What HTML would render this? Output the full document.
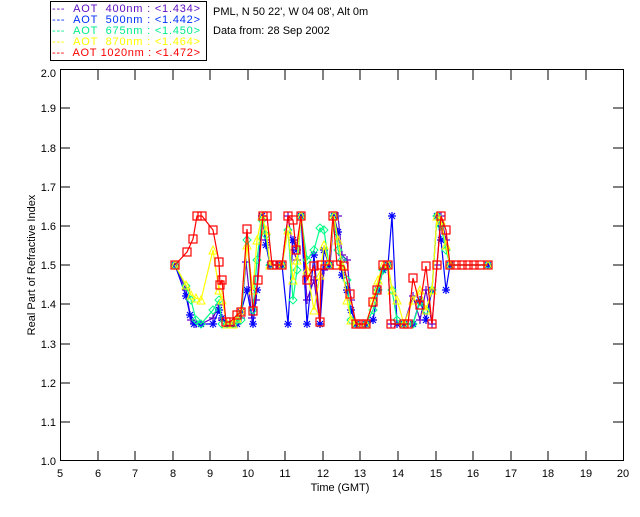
<!DOCTYPE html>
<html><head><style>
body{margin:0;width:640px;height:512px;background:#fff;overflow:hidden;font-family:"Liberation Sans",sans-serif}
svg text{font-family:"Liberation Sans",sans-serif;font-size:11px}
</style></head><body>
<svg width="640" height="512" viewBox="0 0 640 512" xmlns="http://www.w3.org/2000/svg">
<defs>
<marker id="sq" markerWidth="10" markerHeight="10" refX="5" refY="5" markerUnits="userSpaceOnUse"><rect x="1" y="1" width="8" height="8" fill="none" stroke="#f00" stroke-width="1.2"/></marker>
<marker id="st" markerWidth="10" markerHeight="10" refX="5" refY="5" markerUnits="userSpaceOnUse"><path d="M1 5H9M5 1V9M2 2L8 8M8 2L2 8" stroke="#00f" stroke-width="1.2"/></marker>
<marker id="di" markerWidth="10" markerHeight="10" refX="5" refY="5" markerUnits="userSpaceOnUse"><path d="M5 1L9 5L5 9L1 5Z" fill="none" stroke="#0f8" stroke-width="1"/></marker>
<marker id="tr" markerWidth="10" markerHeight="10" refX="5" refY="5" markerUnits="userSpaceOnUse"><path d="M5 1L9 9H1Z" fill="none" stroke="#ff0" stroke-width="1"/></marker>
<marker id="pl" markerWidth="10" markerHeight="10" refX="5" refY="5" markerUnits="userSpaceOnUse"><path d="M1 5H9M5 1V9" stroke="#60c" stroke-width="1.2"/></marker>
</defs>
<rect x="50.5" y="1.5" width="156" height="59" fill="none" stroke="#000"/>
<g font-size="11">
<text x="52" y="12" fill="#6010c0" textLength="148" lengthAdjust="spacing">--- &#160;AOT &#160;400nm : &lt;1.434&gt;</text>
<text x="52" y="23" fill="#0030ff" textLength="148" lengthAdjust="spacing">--- &#160;AOT &#160;500nm : &lt;1.442&gt;</text>
<text x="52" y="34" fill="#00ee88" textLength="148" lengthAdjust="spacing">--- &#160;AOT &#160;675nm : &lt;1.450&gt;</text>
<text x="52" y="45" fill="#ffff00" textLength="148" lengthAdjust="spacing">--- &#160;AOT &#160;870nm : &lt;1.464&gt;</text>
<text x="52" y="56" fill="#ff0000" textLength="148" lengthAdjust="spacing">--- &#160;AOT 1020nm : &lt;1.472&gt;</text>
<text x="213" y="15" fill="#000">PML, N 50 22', W 04 08', Alt 0m</text>
<text x="213" y="34" fill="#000">Data from: 28 Sep 2002</text>
</g>
<rect x="60.5" y="69.5" width="563" height="391" fill="none" stroke="#000"/>
<g stroke="#000">
<path d="M98 461v-10M135 461v-10M173 461v-10M210 461v-10M248 461v-10M285 461v-10M323 461v-10M360 461v-10M398 461v-10M436 461v-10M473 461v-10M511 461v-10M548 461v-10M586 461v-10"/>
<path d="M98 70v10M135 70v10M173 70v10M210 70v10M248 70v10M285 70v10M323 70v10M360 70v10M398 70v10M436 70v10M473 70v10M511 70v10M548 70v10M586 70v10"/>
<path d="M60 422h10M60 383h10M60 344h10M60 304h10M60 265h10M60 226h10M60 187h10M60 148h10M60 108h10"/>
<path d="M623 422h-10M623 383h-10M623 344h-10M623 304h-10M623 265h-10M623 226h-10M623 187h-10M623 148h-10M623 108h-10"/>
</g>
<g font-size="11" fill="#000" text-anchor="middle">
<text x="60" y="477">5</text><text x="98" y="477">6</text><text x="135" y="477">7</text><text x="173" y="477">8</text><text x="210" y="477">9</text><text x="248" y="477">10</text><text x="285" y="477">11</text><text x="323" y="477">12</text><text x="360" y="477">13</text><text x="398" y="477">14</text><text x="436" y="477">15</text><text x="473" y="477">16</text><text x="511" y="477">17</text><text x="548" y="477">18</text><text x="586" y="477">19</text><text x="623" y="477">20</text>
<text x="340" y="491">Time (GMT)</text>
</g>
<g font-size="11" fill="#000" text-anchor="end">
<text x="56" y="465">1.0</text><text x="56" y="426">1.1</text><text x="56" y="387">1.2</text><text x="56" y="348">1.3</text><text x="56" y="308">1.4</text><text x="56" y="269">1.5</text><text x="56" y="230">1.6</text><text x="56" y="191">1.7</text><text x="56" y="152">1.8</text><text x="56" y="112">1.9</text><text x="56" y="77">2.0</text>
</g>
<text transform="translate(35,265) rotate(-90)" text-anchor="middle" font-size="11" fill="#000">Real Part of Refractive Index</text>
<g fill="none" stroke-width="1.2">
<polyline stroke="#60c" marker-mid="url(#pl)" marker-start="url(#pl)" marker-end="url(#pl)" points="175,265 186,290 191,320 196,324 201,324 213,318 219,305 222,320 227,324 233,324 237,320 241,318 246,262 252,318 256,300 262,216 266,240 270,265 277,265 282,265 288,216 293,250 297,260 301,216 307,300 314,280 320,324 324,270 330,265 334,216 338,216 342,255 347,260 351,300 356,324 366,324 373,320 378,290 383,270 388,265 391,324 404,324 413,296 420,320 426,290 432,324 437,265 441,216 446,240 450,265 488,265"/>
<polyline stroke="#00f" marker-mid="url(#st)" marker-start="url(#st)" marker-end="url(#st)" points="175,265 186,296 190,315 194,324 201,324 213,324 219,310 222,318 227,324 233,324 237,324 241,312 247,290 253,324 257,290 262,216 266,245 270,265 282,265 288,324 293,240 297,250 301,216 307,324 314,255 320,324 324,250 329,265 334,216 338,232 342,275 347,290 351,310 356,324 366,324 373,320 378,290 383,270 388,265 392,216 397,324 404,324 413,324 420,300 426,320 432,290 437,216 441,240 446,290 450,265 488,265"/>
<polyline stroke="#0f8" marker-mid="url(#di)" marker-start="url(#di)" marker-end="url(#di)" points="175,265 186,286 191,300 196,320 201,324 213,310 219,300 222,324 227,324 233,324 237,320 241,320 247,240 253,310 257,260 262,220 266,235 270,265 282,265 288,230 293,300 297,270 301,216 307,260 314,250 320,228 324,230 329,265 334,216 338,250 342,260 347,280 351,320 356,324 366,324 373,310 378,290 383,270 388,265 392,290 397,320 404,324 413,324 420,302 426,310 432,290 437,216 441,226 446,250 450,265 488,265"/>
<polyline stroke="#ff0" marker-mid="url(#tr)" marker-start="url(#tr)" marker-end="url(#tr)" points="175,265 186,285 191,295 196,298 201,300 213,250 219,290 222,300 227,324 233,324 237,318 241,310 247,245 253,290 257,240 262,216 266,230 270,265 282,265 288,230 293,280 297,260 301,216 307,270 314,310 320,275 324,245 329,265 334,216 338,240 342,265 347,300 351,320 356,324 366,324 373,300 378,280 383,265 388,265 392,290 397,300 404,324 413,300 420,290 426,310 432,290 437,216 441,220 446,245 450,265 488,265"/>
<polyline stroke="#f00" marker-mid="url(#sq)" marker-start="url(#sq)" marker-end="url(#sq)" points="175,265 187,252 193,239 197,216 202,216 213,230 219,262 220,285 222,280 226,322 230,322 237,315 241,312 247,229 253,311 258,280 263,216 267,216 272,265 277,265 282,265 288,216 293,220 296,250 301,216 307,280 314,266 320,322 321,265 329,265 333,216 337,265 344,266 350,294 356,324 361,324 366,324 373,302 377,290 383,265 388,265 391,324 404,324 408,324 413,278 420,305 426,266 432,324 437,265 441,216 446,230 450,265 456,265 462,265 468,265 474,265 480,265 488,265"/>
</g>
</svg>
</body></html>
